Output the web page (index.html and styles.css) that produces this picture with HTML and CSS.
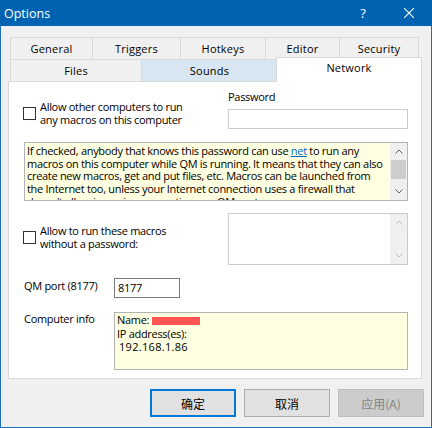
FILE: index.html
```html
<!DOCTYPE html>
<html lang="en">
<head>
<meta charset="utf-8">
<title>Options</title>
<link rel="stylesheet" href="styles.css">
</head>
<body>
<div class="window">
  <div class="titlebar">
    <span class="title">Options</span>
    <span class="cap-btn cap-help">?</span>
    <span class="cap-btn cap-close">
      <svg width="10" height="10" viewBox="0 0 10 10"><path d="M0 0L10 10M10 0L0 10" stroke="#fff" stroke-width="1.1"/></svg>
    </span>
  </div>

  <div class="body">
    <div class="tabs">
      <div class="tabrow">
        <div class="tab w-general">General</div>
        <div class="tab w-triggers">Triggers</div>
        <div class="tab w-hotkeys">Hotkeys</div>
        <div class="tab w-editor">Editor</div>
        <div class="tab w-security">Security</div>
      </div>
      <div class="tabrow">
        <div class="tab w-files">Files</div>
        <div class="tab w-sounds hover">Sounds</div>
        <div class="tab w-network selected">Network</div>
      </div>
    </div>

    <div class="panel">
      <div class="row row-pass">
        <label class="check check-a">
          <span class="box"></span>
          <span class="check-text">Allow other computers to run<br>any macros on this computer</span>
        </label>
        <div class="pass-col">
          <div class="field-label">Password</div>
          <div class="input input-pass"></div>
        </div>
      </div>

      <div class="memo info">
        <div class="memo-text">If checked, anybody that knows this password can use <a class="link" href="#">net</a> to run any<br>macros on this computer while QM is running. It means that they can also<br>create new macros, get and put files, etc. Macros can be launched from<br>the Internet too, unless your Internet connection uses a firewall that<br>doesn't allow incoming connections on QM port.</div>
        <div class="vscroll">
          <span class="arrow"><svg width="8" height="5" viewBox="0 0 8 5"><path d="M0.5 4.5L4 1L7.5 4.5" fill="none" stroke="#606060" stroke-width="1"/></svg></span>
          <span class="thumb"></span>
          <span class="track"></span>
          <span class="arrow"><svg width="8" height="5" viewBox="0 0 8 5"><path d="M0.5 0.5L4 4L7.5 0.5" fill="none" stroke="#606060" stroke-width="1"/></svg></span>
        </div>
      </div>

      <div class="row row-nopass">
        <label class="check check-b">
          <span class="box"></span>
          <span class="check-text">Allow to run these macros<br>without a password:</span>
        </label>
        <div class="memo macros">
          <div class="memo-text"></div>
          <div class="vscroll disabled">
            <span class="arrow"><svg width="8" height="5" viewBox="0 0 8 5"><path d="M0.5 4.5L4 1L7.5 4.5" fill="none" stroke="#c2c2c2" stroke-width="1"/></svg></span>
            <span class="track"></span>
            <span class="arrow"><svg width="8" height="5" viewBox="0 0 8 5"><path d="M0.5 0.5L4 4L7.5 0.5" fill="none" stroke="#c2c2c2" stroke-width="1"/></svg></span>
          </div>
        </div>
      </div>

      <div class="row row-port">
        <div class="side-label">QM port (8177)</div>
        <div class="input input-port">8177</div>
      </div>

      <div class="row row-info">
        <div class="side-label">Computer info</div>
        <div class="compinfo">
          <div>Name: <span class="redact"></span></div>
          <div>IP address(es):</div>
          <div class="ip">192.168.1.86</div>
        </div>
      </div>
    </div>

    <div class="buttons">
      <button class="btn default">确定</button>
      <button class="btn">取消</button>
      <button class="btn disabled">应用(A)</button>
    </div>
  </div>
</div>
</body>
</html>
```

FILE: styles.css
```css
* { box-sizing: border-box; }

html, body {
  margin: 0;
  padding: 0;
}

body {
  width: 432px;
  height: 428px;
  overflow: hidden;
  font-family: "Open Sans", "Noto Sans", sans-serif;
  font-size: 11px;
  letter-spacing: -0.3px;
  color: #000;
  background: #f0f0f0;
}

.window {
  width: 432px;
  height: 428px;
  display: flex;
  flex-direction: column;
  background: #f0f0f0;
  border: 1px solid #1f6fc1;
  border-top: none;
}

/* caption */
.titlebar {
  height: 26px;
  flex: none;
  display: flex;
  align-items: center;
  background: #0063b1;
  color: #fff;
  margin: 0 -1px;
  letter-spacing: 0;
}

.title {
  padding-left: 4px;
  font-size: 12.5px;
  flex: 1;
}

.cap-btn {
  width: 46px;
  height: 26px;
  display: flex;
  align-items: center;
  justify-content: center;
}

.cap-help {
  font-size: 13px;
}

.body {
  flex: 1;
  padding: 11px 9px 0 7px;
}

/* tab strip */
.tabs {
  margin: 0 3px 0 2px;
}

.tabrow {
  display: flex;
  height: 22px;
}

.tab {
  flex: none;
  border-top: 1px solid #d9d9d9;
  border-left: 1px solid #d9d9d9;
  text-align: center;
  line-height: 21px;
  letter-spacing: 0.2px;
  background: #f0f0f0;
}

.tab:last-child {
  border-right: 1px solid #d9d9d9;
}

.w-general { width: 82px; }
.w-triggers { width: 88px; }
.w-hotkeys { width: 85px; }
.w-editor { width: 74px; }
.w-security { width: 80px; }
.w-files { width: 131px; }
.w-sounds { width: 136px; }
.w-network { width: 142px; }

.tab.hover {
  background: #d8e6f2;
}

.tab.selected {
  position: relative;
  z-index: 1;
  width: 146px;
  height: 25px;
  margin: -2px -3px -1px -1px;
  background: #fff;
  border: 1px solid #d9d9d9;
  border-bottom: none;
  line-height: 20px;
}

/* page */
.panel {
  height: 298px;
  background: #fff;
  border: 1px solid #d9d9d9;
  padding: 0 13px 0 14px;
}

.row {
  display: flex;
}

.row-pass {
  justify-content: space-between;
  margin-top: 8px;
}

.check {
  display: flex;
  align-items: center;
  line-height: 13px;
}

.box {
  width: 13px;
  height: 13px;
  border: 1px solid #333;
  background: #fff;
  margin-right: 4px;
  flex: none;
}

.check-a {
  margin-top: 10px;
  align-self: flex-start;
}

.check-b {
  margin-top: 11px;
  align-self: flex-start;
  flex: 1;
}

.pass-col {
  width: 180px;
}

.field-label {
  line-height: 13px;
}

.input {
  border: 1px solid #7a7a7a;
  background: #fff;
}

.input-pass {
  margin-top: 6px;
  height: 20px;
  border-color: #cccccc;
}

.memo {
  display: flex;
  border: 1px solid #b9b9b9;
}

.memo-text {
  flex: 1;
  overflow: hidden;
}

.info {
  margin: 13px 0 0 1px;
  height: 59px;
  background: #ffffe1;
  border-color: #b4b4b4;
}

.info .memo-text {
  padding: 2px 0 0 2px;
  line-height: 12.67px;
  white-space: nowrap;
}

.link {
  color: #0066cc;
}

.vscroll {
  width: 17px;
  flex: none;
  display: flex;
  flex-direction: column;
  background: #f0f0f0;
}

.arrow {
  height: 17px;
  flex: none;
  display: flex;
  align-items: center;
  justify-content: center;
}

.thumb {
  height: 19px;
  margin: 0 1px;
  background: #cdcdcd;
  flex: none;
}

.track {
  flex: 1;
}

.row-nopass {
  margin-top: 12px;
}

.macros {
  width: 180px;
  height: 52px;
  border-color: #cccccc;
  background: #fff;
}

.side-label {
  width: 90px;
  margin-left: 1px;
  line-height: 13px;
  flex: none;
}

.row-port {
  margin-top: 13px;
}

.row-port .side-label {
  margin-top: 1px;
}

.input-port {
  width: 66px;
  height: 20px;
  padding: 2px 0 0 3px;
  line-height: 14px;
}

.row-info {
  margin-top: 14px;
}

.compinfo {
  width: 294px;
  height: 58px;
  background: #ffffe1;
  border: 1px solid #b4b4b4;
  padding: 0 0 0 2px;
  line-height: 13.5px;
}

.redact {
  display: inline-block;
  width: 48px;
  height: 8px;
  margin-left: 0;
  background: #ff5454;
  vertical-align: -1px;
}

.ip {
  padding-left: 2px;
  letter-spacing: 0.3px;
}

/* dialog buttons */
.buttons {
  display: flex;
  justify-content: flex-end;
  gap: 8px;
  margin: 10px -2px 0 0;
}

.btn {
  width: 86px;
  height: 28px;
  padding: 0;
  background: #e1e1e1;
  border: 1px solid #adadad;
  font-family: "Noto Sans CJK SC", sans-serif;
  font-size: 12px;
  letter-spacing: 0;
  color: #000;
}

.btn.default {
  border: 2px solid #0078d7;
}

.btn.disabled {
  background: #cccccc;
  border-color: #bfbfbf;
  color: #838383;
}
```
